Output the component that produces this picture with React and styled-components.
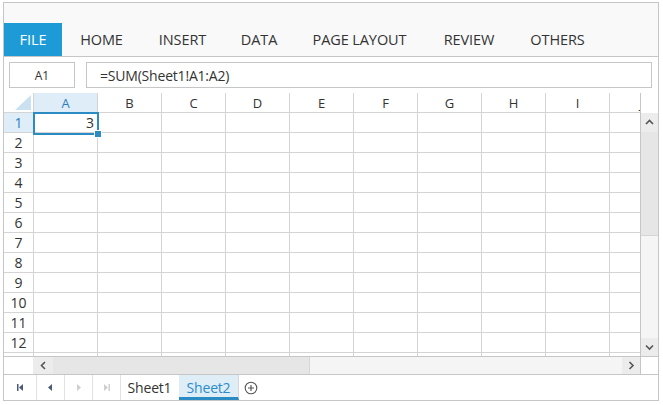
import React from 'react';
import styled, { createGlobalStyle } from 'styled-components';

const GlobalStyle = createGlobalStyle`
  body {
    margin: 0;
    background: #fff;
    font-family: "Open Sans", "Liberation Sans", sans-serif;
    color: #333;
  }
`;

const Frame = styled.div`
  margin: 2px 0 0 3px;
  width: 656px;
  height: 399px;
  box-sizing: border-box;
  border: 1px solid #c6c6c6;
  display: flex;
  flex-direction: column;
  overflow: hidden;
`;

const Ribbon = styled.div`
  height: 54px;
  box-sizing: border-box;
  padding-top: 20px;
  background: #f9f9f9;
  border-bottom: 1px solid #c6c6c6;
  display: flex;
  align-items: stretch;
`;

const Tab = styled.div`
  width: ${p => p.$w}px;
  height: 33px;
  display: flex;
  align-items: center;
  justify-content: center;
  font-size: 14.5px;
  letter-spacing: -0.1px;
  color: ${p => (p.$active ? '#fff' : '#333')};
  background: ${p => (p.$active ? '#1e9bd7' : 'transparent')};
`;

const FormulaBar = styled.div`
  height: 36px;
  box-sizing: border-box;
  padding: 5px 6px 5px 5px;
  display: flex;
  gap: 11px;
`;

const NameBox = styled.div`
  width: 66px;
  box-sizing: border-box;
  border: 1px solid #c6c6c6;
  display: flex;
  align-items: center;
  justify-content: center;
  font-size: 12px;
  color: #333;
`;

const FormulaInput = styled.div`
  flex: 1;
  box-sizing: border-box;
  border: 1px solid #c6c6c6;
  display: flex;
  align-items: center;
  padding-left: 13px;
  font-size: 14px;
  letter-spacing: -0.2px;
  color: #333;
`;

const GridBody = styled.div`
  height: 263px;
  display: flex;
`;

const Viewport = styled.div`
  position: relative;
  width: 636px;
  overflow: hidden;
`;

const Row = styled.div`
  display: flex;
  height: 20px;
  box-sizing: border-box;
  border-bottom: 1px solid #d4d4d4;
`;

const Corner = styled.div`
  flex: 0 0 30px;
  box-sizing: border-box;
  border-right: 1px solid #d4d4d4;
  display: flex;
  align-items: flex-end;
  justify-content: flex-end;
  padding: 0 2px 2px 0;
`;

const RowHead = styled.div`
  flex: 0 0 30px;
  box-sizing: border-box;
  border-right: 1px solid #d4d4d4;
  display: flex;
  align-items: center;
  justify-content: center;
  font-size: 14px;
  background: ${p => (p.$on ? '#deedf7' : '#fff')};
  color: ${p => (p.$on ? '#2a7fbf' : '#333')};
`;

const ColHead = styled.div`
  flex: 0 0 64px;
  box-sizing: border-box;
  border-right: 1px solid #d4d4d4;
  display: flex;
  align-items: center;
  justify-content: center;
  font-size: 13px;
  background: ${p => (p.$on ? '#deedf7' : '#fff')};
  color: ${p => (p.$on ? '#2a7fbf' : '#333')};
`;

const Cell = styled.div`
  flex: 0 0 64px;
  box-sizing: border-box;
  border-right: 1px solid #d4d4d4;
  display: flex;
  align-items: center;
  justify-content: flex-end;
  padding-right: 3px;
  font-size: 14px;
  color: #333;
`;

const Selection = styled.div`
  position: absolute;
  left: 29px;
  top: 19px;
  width: 66px;
  height: 23px;
  box-sizing: border-box;
  border: 2px solid #2b8cc4;
  pointer-events: none;
`;

const FillHandle = styled.div`
  position: absolute;
  right: -5px;
  bottom: -5px;
  width: 6px;
  height: 6px;
  background: #2b8cc4;
  border: 1px solid #fff;
`;

const VScroll = styled.div`
  width: 18px;
  box-sizing: border-box;
  border-left: 1px solid #c6c6c6;
  display: flex;
  flex-direction: column;
  padding-top: 20px;
`;

const ArrowBtn = styled.div`
  flex: 0 0 ${p => p.$size || 18}px;
  display: flex;
  align-items: center;
  justify-content: center;
  background: #ececec;
`;

const Thumb = styled.div`
  flex: 0 0 ${p => p.$size}px;
  background: #e6e6e6;
  box-sizing: border-box;
  border-${p => p.$edge}: 1px solid #d6d6d6;
`;

const Track = styled.div`
  flex: 1;
  background: #f5f5f5;
`;

const HScroll = styled.div`
  height: 18px;
  box-sizing: border-box;
  border-top: 1px solid #c6c6c6;
  display: flex;
`;

const Spacer = styled.div`
  flex: 0 0 29px;
  background: #fff;
`;

const ScrollCorner = styled.div`
  flex: 0 0 18px;
  box-sizing: border-box;
  border-left: 1px solid #c6c6c6;
  background: #fff;
`;

const SheetBar = styled.div`
  height: 26px;
  box-sizing: border-box;
  border-top: 1px solid #c6c6c6;
  display: flex;
  align-items: stretch;
`;

const NavBtn = styled.div`
  flex: 0 0 ${p => p.$w}px;
  box-sizing: border-box;
  border-right: 1px solid #e2e2e2;
  display: flex;
  align-items: center;
  justify-content: center;
`;

const SheetTab = styled.div`
  flex: 0 0 ${p => p.$w}px;
  box-sizing: border-box;
  display: flex;
  align-items: center;
  justify-content: center;
  font-size: 14px;
  letter-spacing: -0.2px;
  color: ${p => (p.$active ? '#2a8ccd' : '#333')};
  background: ${p => (p.$active ? '#deedf6' : '#fff')};
  border-bottom: 3px solid ${p => (p.$active ? '#2b8cc4' : 'transparent')};
  border-right: 1px solid ${p => (p.$active ? '#d6d6d6' : 'transparent')};
  padding-top: 2px;
`;

const AddBtn = styled.div`
  flex: 0 0 24px;
  display: flex;
  align-items: center;
  justify-content: center;
`;

const tabs = [
  ['FILE', 58],
  ['HOME', 79],
  ['INSERT', 83],
  ['DATA', 70],
  ['PAGE LAYOUT', 131],
  ['REVIEW', 88],
  ['OTHERS', 89],
];

const cols = ['A', 'B', 'C', 'D', 'E', 'F', 'G', 'H', 'I', 'J'];
const rows = Array.from({ length: 13 }, (_, i) => i + 1);

const Chevron = ({ dir }) => {
  const d = {
    up: 'M1 5 L4.5 1.5 L8 5',
    down: 'M1 1.5 L4.5 5 L8 1.5',
    left: 'M5 1 L1.5 4.5 L5 8',
    right: 'M1.5 1 L5 4.5 L1.5 8',
  }[dir];
  const vert = dir === 'up' || dir === 'down';
  return (
    <svg width={vert ? 9 : 7} height={vert ? 7 : 9} viewBox={vert ? '0 0 9 7' : '0 0 7 9'}>
      <path d={d} fill="none" stroke="#555" strokeWidth="1.6" />
    </svg>
  );
};

const NavIcon = ({ kind, color }) => (
  <svg width="9" height="9" viewBox="0 0 9 9">
    {kind === 'first' && (
      <>
        <rect x="1" y="1" width="1.5" height="7" fill={color} />
        <path d="M7 1 L3 4.5 L7 8 Z" fill={color} />
      </>
    )}
    {kind === 'prev' && <path d="M6 1 L2 4.5 L6 8 Z" fill={color} />}
    {kind === 'next' && <path d="M3 1 L7 4.5 L3 8 Z" fill={color} />}
    {kind === 'last' && (
      <>
        <path d="M2 1 L6 4.5 L2 8 Z" fill={color} />
        <rect x="6.5" y="1" width="1.5" height="7" fill={color} />
      </>
    )}
  </svg>
);

const App = () => (
  <>
    <GlobalStyle />
    <Frame>
      <Ribbon>
        {tabs.map(([label, w], i) => (
          <Tab key={label} $w={w} $active={i === 0}>{label}</Tab>
        ))}
      </Ribbon>

      <FormulaBar>
        <NameBox>A1</NameBox>
        <FormulaInput>=SUM(Sheet1!A1:A2)</FormulaInput>
      </FormulaBar>

      <GridBody>
        <Viewport>
          <Row>
            <Corner>
              <svg width="16" height="15" viewBox="0 0 16 15">
                <path d="M16 0 L16 15 L0 15 Z" fill="#c9e1f1" />
              </svg>
            </Corner>
            {cols.map(c => (
              <ColHead key={c} $on={c === 'A'}>{c}</ColHead>
            ))}
          </Row>
          {rows.map(r => (
            <Row key={r}>
              {/* row 13 is only a sliver under row 12, its number is not shown */}
              <RowHead $on={r === 1}>{r < 13 ? r : ''}</RowHead>
              {cols.map(c => (
                <Cell key={c}>{r === 1 && c === 'A' ? '3' : ''}</Cell>
              ))}
            </Row>
          ))}
          <Selection>
            <FillHandle />
          </Selection>
        </Viewport>
        <VScroll>
          <ArrowBtn $size={19}><Chevron dir="up" /></ArrowBtn>
          <Thumb $size={104} $edge="bottom" />
          <Track />
          <ArrowBtn $size={18}><Chevron dir="down" /></ArrowBtn>
        </VScroll>
      </GridBody>

      <HScroll>
        <Spacer />
        <ArrowBtn $size={20}><Chevron dir="left" /></ArrowBtn>
        <Thumb $size={257} $edge="right" />
        <Track />
        <ArrowBtn $size={18}><Chevron dir="right" /></ArrowBtn>
        <ScrollCorner />
      </HScroll>

      <SheetBar>
        <NavBtn $w={33}><NavIcon kind="first" color="#4a5a78" /></NavBtn>
        <NavBtn $w={28}><NavIcon kind="prev" color="#4a5a78" /></NavBtn>
        <NavBtn $w={28}><NavIcon kind="next" color="#cfcfcf" /></NavBtn>
        <NavBtn $w={28}><NavIcon kind="last" color="#cfcfcf" /></NavBtn>
        <SheetTab $w={58}>Sheet1</SheetTab>
        <SheetTab $w={60} $active>Sheet2</SheetTab>
        <AddBtn>
          <svg width="14" height="14" viewBox="0 0 14 14">
            <circle cx="7" cy="7" r="5.8" fill="none" stroke="#555" strokeWidth="1.1" />
            <path d="M7 4 V10 M4 7 H10" stroke="#555" strokeWidth="1.2" />
          </svg>
        </AddBtn>
      </SheetBar>
    </Frame>
  </>
);

export default App;
